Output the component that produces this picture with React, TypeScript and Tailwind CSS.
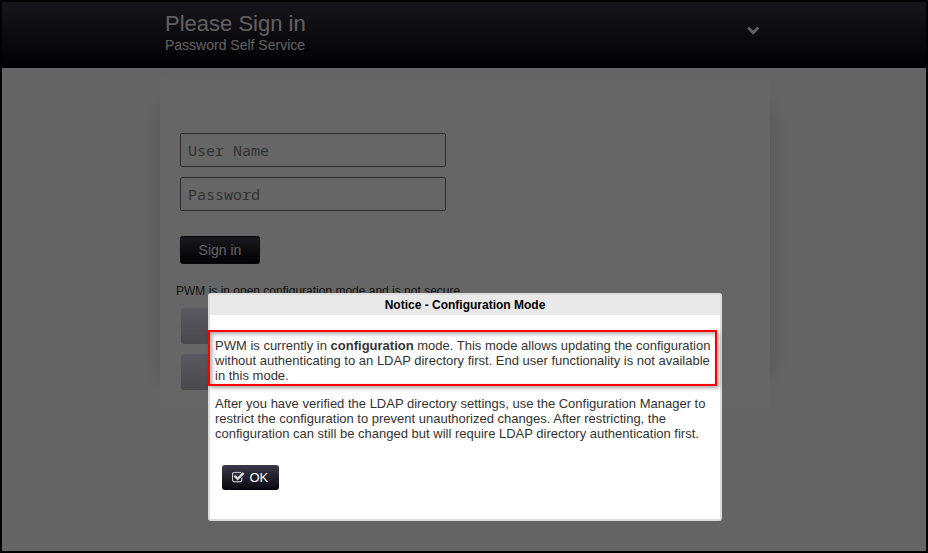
import React from "react";

const ChevronDown = () => (
  <svg viewBox="50 0 1792 1792" className="h-[13px] w-[13px] fill-[#f0f0f0] stroke-[#f0f0f0] stroke-[40]">
    <path d="M1683 808l-742 741q-19 19-45 19t-45-19l-742-741q-19-19-19-45.5t19-45.5l166-165q19-19 45-19t45 19l531 531 531-531q19-19 45-19t45 19l166 165q19 19 19 45.5t-19 45.5z" />
  </svg>
);

const CheckSquare = () => (
  <svg viewBox="50 0 1792 1792" className="h-[13px] w-[13px] fill-[#dcdcdc] stroke-[#dcdcdc] stroke-[20]">
    <path d="M1472 930v318q0 119-84.5 203.5t-203.5 84.5h-832q-119 0-203.5-84.5t-84.5-203.5v-832q0-119 84.5-203.5t203.5-84.5h832q63 0 117 25 15 7 18 23 3 17-9 29l-49 49q-10 10-23 10-3 0-9-2-23-6-45-6h-832q-66 0-113 47t-47 113v832q0 66 47 113t113 47h832q66 0 113-47t47-113v-254q0-13 9-22l64-64q10-10 23-10 6 0 12 3 20 8 20 29zm231-489l-814 814q-24 24-57 24t-57-24l-430-430q-24-24-24-57t24-57l110-110q24-24 57-24t57 24l263 263 647-647q24-24 57-24t57 24l110 110q24 24 24 57t-24 57z" />
  </svg>
);

const Header = () => (
  <header className="h-[68px] bg-linear-to-b/srgb from-[#3c3948] to-[#020006]">
    <div className="mx-auto flex w-[610px] translate-x-px justify-between pt-[10px] pr-[10px] pl-[5px]">
      <div>
        <h1 className="text-[22px] leading-[27px] text-[#efefef]">Please Sign in</h1>
        <p className="text-[14px] leading-[16px] text-[#efefef]">Password Self Service</p>
      </div>
      <div className="pt-[13px]">
        <ChevronDown />
      </div>
    </div>
  </header>
);

const Field = ({ label, type }: { label: string; type: string }) => (
  <input
    type={type}
    placeholder={label}
    className="block h-[34px] w-[266px] rounded-[2px] border border-[#777] bg-white px-[7px] font-['Noto_Sans_Mono','DejaVu_Sans_Mono',monospace] text-[15px] placeholder:text-[#808080]"
  />
);

const SignInCard = () => (
  <main className="relative mx-auto mt-[11px] h-[329px] w-[610px] translate-x-px">
    <div className="absolute top-[18px] bottom-[22px] left-0 w-full rounded-[50%/12px] shadow-[0_0_20px_rgba(0,0,0,0.16)]" />
    <div className="relative h-full rounded-[3px] bg-white pt-[54px] pl-5">
      <div className="flex flex-col gap-[10px]">
        <Field label="User Name" type="text" />
        <Field label="Password" type="password" />
      </div>
      <button className="mt-[25px] block h-7 w-20 rounded-[3px] border border-[#1a1920] border-t-black bg-linear-to-b/srgb from-[#444150] to-[#04020a] text-[14px] leading-[26px] text-[#efefef]">
        Sign in
      </button>
      <p className="mt-[18px] -ml-1 text-[12px] leading-[18px] text-[#333]">
        PWM is in open configuration mode and is not secure.
      </p>
      <div className="mt-[8px] ml-px flex flex-col gap-[10px]">
        <div className="h-9 w-[266px] rounded-[3px] bg-linear-to-b/srgb from-[#e2def2] to-[#b8b6c2]" />
        <div className="h-9 w-[266px] rounded-[3px] bg-linear-to-b/srgb from-[#e2def2] to-[#b8b6c2]" />
      </div>
    </div>
  </main>
);

const NoticeDialog = () => (
  <section className="absolute top-[293px] left-[208px] h-[228px] w-[514px] rounded-[3px] border-2 border-[#dcdcdc] bg-white text-[13px] leading-[15px] text-[#333]">
    <h2 className="h-[20px] bg-[#e9e9e9] text-center text-[12px] leading-[20px] font-bold text-black">
      Notice - Configuration Mode
    </h2>
    <div className="pt-[23px] pl-[5px]">
      <p className="whitespace-nowrap">
        PWM is currently in <b>configuration</b> mode. This mode allows updating the configuration
        <br />
        without authenticating to an LDAP directory first. End user functionality is not available
        <br />
        in this mode.
      </p>
      <p className="mt-[13px] whitespace-nowrap">
        After you have verified the LDAP directory settings, use the Configuration Manager to
        <br />
        restrict the configuration to prevent unauthorized changes. After restricting, the
        <br />
        configuration can still be changed but will require LDAP directory authentication first.
      </p>
      <button className="mt-[24px] ml-[7px] flex h-[25px] w-[57px] items-center gap-[4.5px] rounded-[3px] bg-linear-to-b/srgb from-[#3b394a] to-[#08060d] pl-[10px] text-[13px] text-white">
        <CheckSquare />
        OK
      </button>
    </div>
    <div className="absolute top-[35px] -left-[2px] h-[56px] w-[509px] border-2 border-[#f00] shadow-[2px_2px_4px_rgba(0,0,0,0.35),inset_2px_2px_4px_rgba(0,0,0,0.35)]" />
  </section>
);

export default function App() {
  return (
    <div className="relative h-[553px] w-[928px] overflow-hidden bg-[#fafafa] font-['Liberation_Sans',Arial,sans-serif]">
      <Header />
      <SignInCard />
      <div className="absolute inset-0 bg-black/60" />
      <NoticeDialog />
      <div className="pointer-events-none absolute inset-0 border-2 border-black" />
    </div>
  );
}
